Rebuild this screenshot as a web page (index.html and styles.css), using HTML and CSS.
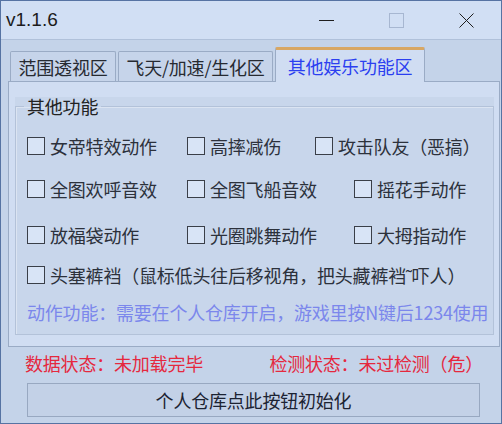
FILE: index.html
```html
<!DOCTYPE html>
<html lang="zh-CN">
<head>
<meta charset="utf-8">
<title>v1.1.6</title>
<link rel="stylesheet" href="styles.css">
</head>
<body>
<div class="window">
  <div class="titlebar">
    <div class="title">v1.1.6</div>
    <div class="cbtn"><svg width="15" height="15" viewBox="0 0 15 15"><line x1="0" y1="7.5" x2="15" y2="7.5" stroke="#1e1e1e" stroke-width="1"/></svg></div>
    <div class="cbtn"><svg width="15" height="15" viewBox="0 0 15 15"><rect x="0.5" y="0.5" width="14" height="14" fill="none" stroke="#a7b7d1" stroke-width="1"/></svg></div>
    <div class="cbtn"><svg width="15" height="15" viewBox="0 0 15 15"><path d="M0.5 0.5 L14.5 14.5 M14.5 0.5 L0.5 14.5" stroke="#1e1e1e" stroke-width="1" fill="none"/></svg></div>
  </div>
  <div class="content">
    <div class="tabs">
      <div class="tab t1">范围透视区</div>
      <div class="tab t2">飞天/加速/生化区</div>
      <div class="tab active t3">其他娱乐功能区</div>
    </div>
    <div class="panel">
      <div class="group">
        <fieldset class="fs">
          <legend>其他功能</legend>
          <div class="row r1">
            <label class="item w1"><span class="box"></span>女帝特效动作</label>
            <label class="item w2a"><span class="box"></span>高摔减伤</label>
            <label class="item"><span class="box"></span>攻击队友（恶搞）</label>
          </div>
          <div class="row r2">
            <label class="item w1"><span class="box"></span>全图欢呼音效</label>
            <label class="item w2b"><span class="box"></span>全图飞船音效</label>
            <label class="item"><span class="box"></span>摇花手动作</label>
          </div>
          <div class="row r3">
            <label class="item w1"><span class="box"></span>放福袋动作</label>
            <label class="item w2b"><span class="box"></span>光圈跳舞动作</label>
            <label class="item"><span class="box"></span>大拇指动作</label>
          </div>
          <div class="row r4">
            <label class="item"><span class="box"></span>头塞裤裆（鼠标低头往后移视角，把头藏裤裆˜吓人）</label>
          </div>
          <div class="info">动作功能：需要在个人仓库开启，游戏里按N键后1234使用</div>
        </fieldset>
      </div>
    </div>
    <div class="status">
      <span>数据状态：未加载完毕</span>
      <span>检测状态：未过检测（危）</span>
    </div>
    <button class="init">个人仓库点此按钮初始化</button>
  </div>
</div>
</body>
</html>
```

FILE: styles.css
```css
* { box-sizing: border-box; }
html, body { margin: 0; padding: 0; }
body {
  font-family: "Noto Sans CJK SC", "Microsoft YaHei", sans-serif;
  background: #c4d3e9;
}
.window {
  width: 502px;
  height: 424px;
  border: 1px solid #5673a3;
  background: #c4d3e9;
  display: flex;
  flex-direction: column;
}
.titlebar {
  height: 39px;
  flex: none;
  border-bottom: 1px solid #b0c1da;
  background: #d1dff4;
  display: flex;
  align-items: center;
}
.title {
  flex: 1;
  padding-left: 5px;
  font-family: "Liberation Sans", Arial, sans-serif;
  font-size: 19px;
  color: #1c1c1c;
}
.cbtn {
  width: 70px;
  height: 38px;
  display: flex;
  align-items: center;
  justify-content: center;
}
.cbtn svg { display: block; }
.content {
  flex: 1;
  padding: 7px 1px 0 7px;
  display: flex;
  flex-direction: column;
}
.tabs {
  height: 34px;
  display: flex;
  align-items: flex-end;
  gap: 2px;
  padding-left: 2px;
}
.tab {
  height: 30px;
  border: 1px solid #9aabc5;
  border-bottom: none;
  border-radius: 2px 2px 0 0;
  background: #c6d4ea;
  display: flex;
  align-items: center;
  justify-content: center;
  font-size: 18px;
  line-height: 20px;
  letter-spacing: -0.2px;
  color: #262a31;
  white-space: nowrap;
}
.t1 { width: 106px; }
.t2 { width: 155px; }
.t3 { width: 150px; }
.tab.active {
  position: relative;
  z-index: 2;
  height: 35px;
  margin-bottom: -1px;
  border-top: 3px solid #d8a764;
  background: #d0ddf2;
  color: #2b3ff0;
  padding-bottom: 1px;
}
.panel {
  height: 266px;
  border: 1px solid #9aabc5;
  background: #d0ddf2;
  padding: 15px 5px 11px 6px;
}
.group {
  height: 238px;
  background: #c8d6eb;
}
.fs {
  margin: 0;
  height: 238px;
  padding: 0 0 0 11px;
  border: 1px solid #b3c2d9;
  box-shadow: inset 1px 1px 0 #dbe4f2;
  min-width: 0;
}
.fs legend {
  margin-left: -3px;
  padding: 0 3px;
  font-size: 18px;
  line-height: 18px;
  letter-spacing: -0.2px;
  color: #222;
}
.row {
  height: 24px;
  display: flex;
  align-items: center;
}
.r1 { margin-top: 19px; }
.r2 { margin-top: 19px; }
.r3 { margin-top: 22px; }
.r4 { margin-top: 16px; }
.item {
  display: flex;
  align-items: center;
  gap: 5px;
  font-size: 18px;
  line-height: 24px;
  letter-spacing: -0.2px;
  color: #2c313b;
  white-space: nowrap;
}
.w1 { width: 160px; }
.w2a { width: 128px; }
.w2b { width: 167px; }
.box {
  width: 18px;
  height: 18px;
  flex: none;
  border: 1px solid #3a3f48;
  background: #d8e4f6;
}
.info {
  margin-top: 13px;
  height: 24px;
  line-height: 24px;
  font-size: 18px;
  letter-spacing: -0.2px;
  color: #7b87ec;
  white-space: nowrap;
}
.status {
  margin-top: 5px;
  height: 22px;
  line-height: 22px;
  padding: 0 17px;
  display: flex;
  justify-content: space-between;
  font-size: 18px;
  letter-spacing: -0.2px;
  color: #e5283e;
}
.init {
  margin: 9px 0 0 19px;
  width: 453px;
  height: 34px;
  border: 1px solid #98a8c1;
  background: #c3d1e7;
  font-family: "Noto Sans CJK SC", sans-serif;
  font-size: 18px;
  letter-spacing: -0.2px;
  color: #1c2333;
  padding: 0;
}
```
